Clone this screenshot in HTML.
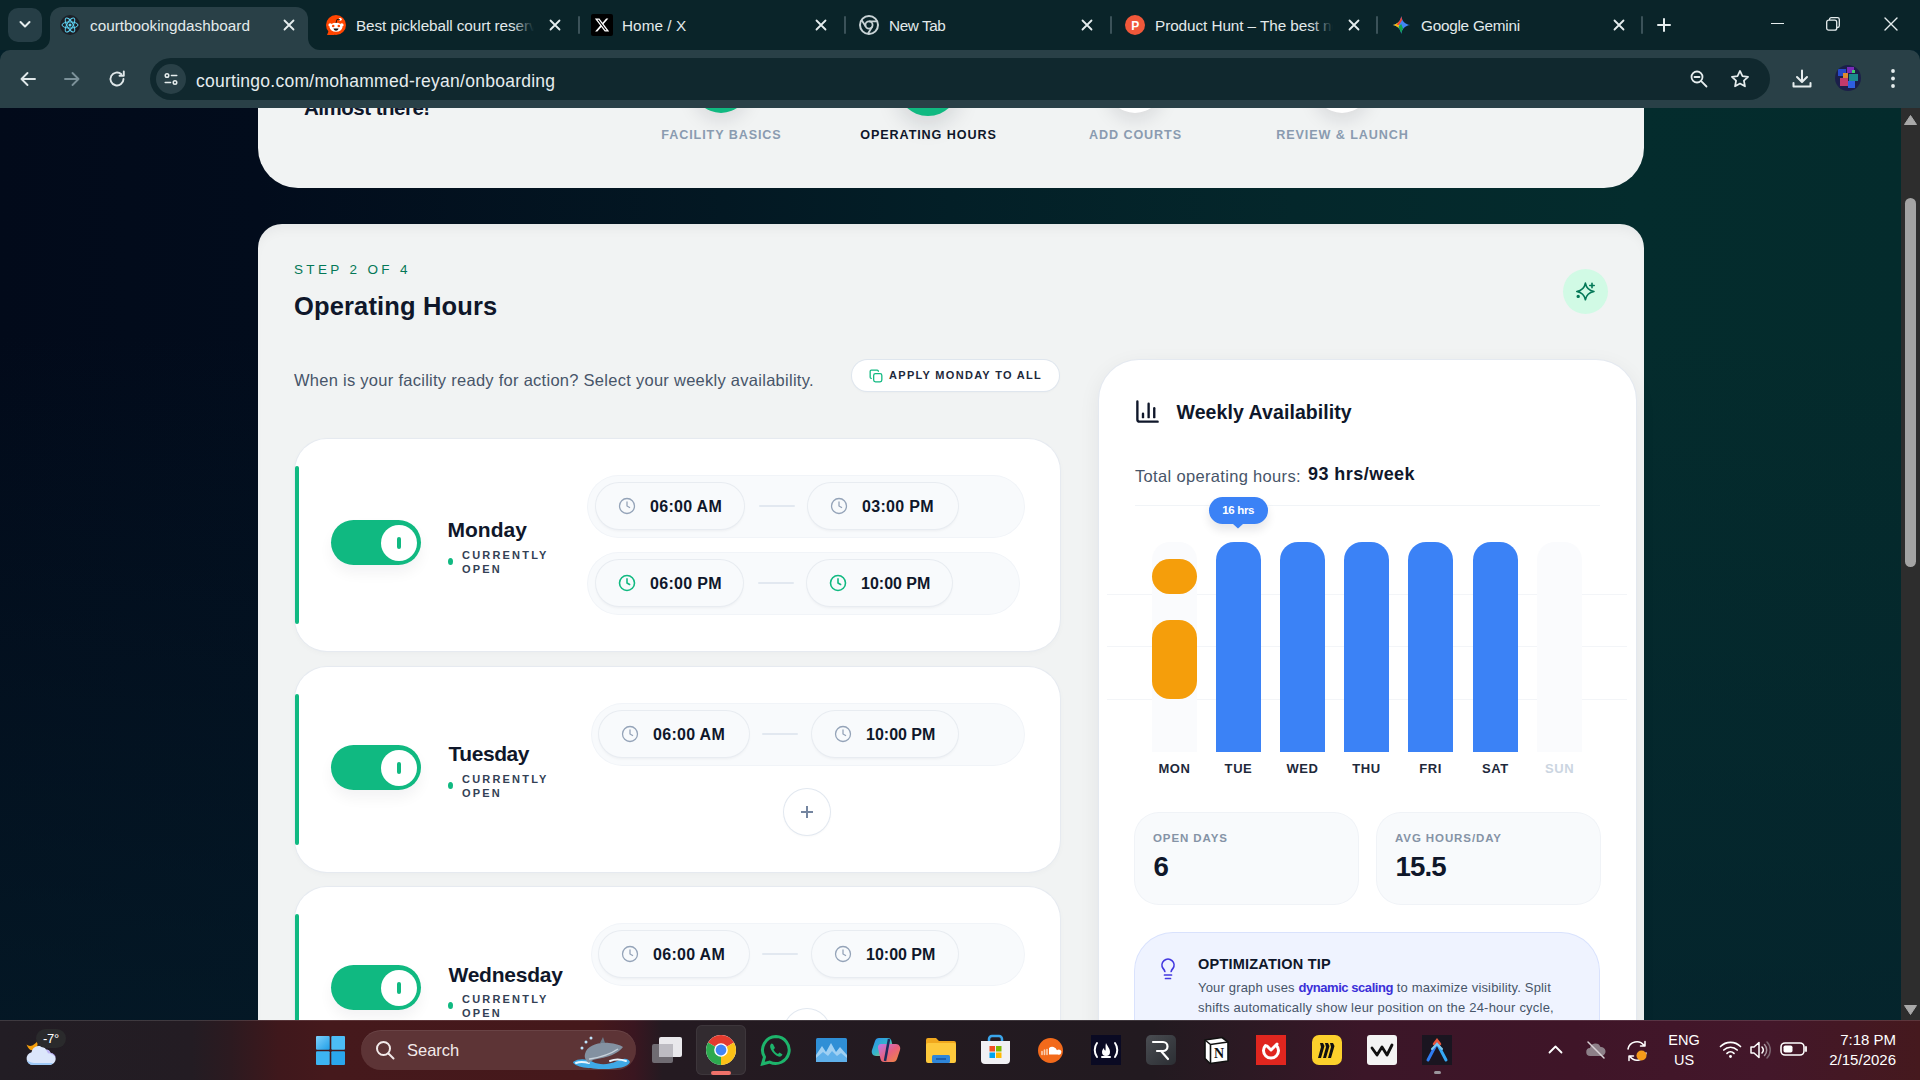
<!DOCTYPE html>
<html lang="en">
<head>
<meta charset="utf-8">
<title>courtbookingdashboard</title>
<style>
*{box-sizing:border-box;margin:0;padding:0}
html,body{width:1920px;height:1080px;overflow:hidden;background:#03202a;font-family:"Liberation Sans",sans-serif;}
.abs{position:absolute}
#root{position:relative;width:1920px;height:1080px;overflow:hidden}
/* ---------- browser chrome ---------- */
#tabstrip{position:absolute;left:0;top:0;width:1920px;height:50px;background:#0a2429}
#toolbar{position:absolute;left:0;top:50px;width:1920px;height:58px;background:#294047;border-radius:10px 10px 0 0}
#omni{position:absolute;left:150px;top:8px;width:1620px;height:42px;border-radius:21px;background:#10282e}
#omni .site{position:absolute;left:6px;top:6px;width:30px;height:30px;border-radius:15px;background:#294047}
#omni .url{position:absolute;left:46px;top:1.500px;line-height:42px;font-size:17.500px;color:#e6edee;letter-spacing:.26px}
.tab{position:absolute;top:7px;height:43px;color:#e3eaeb;font-size:15.5px;line-height:37px}
.tab .t{position:absolute;left:40px;top:0;white-space:nowrap;overflow:hidden}
.tab.active{background:#294047;border-radius:12px 12px 0 0}
.tabsep{position:absolute;top:16px;width:2px;height:18px;background:#3b5259;border-radius:1px}
.ico{position:absolute}
.tt{position:absolute;top:10.500px;height:30px;line-height:30px;font-size:15.3px;color:#e3eaeb;white-space:nowrap;overflow:hidden;letter-spacing:.05px}
.cx{position:absolute;top:19px;width:12px;height:12px;fill:none;stroke:#e6edee;stroke-width:1.8;stroke-linecap:round}
/* ---------- page ---------- */
#page{position:absolute;left:0;top:108px;width:1901px;height:912px;overflow:hidden;
 background:linear-gradient(180deg,rgba(5,32,44,0) 25%,rgba(5,32,44,.6) 100%),linear-gradient(90deg,#020a1a 0%,#020c1c 13.500%,#031823 38%,#031f27 50%,#04272b 68%,#042c2d 86%,#042b2c 100%)}
#sb{position:absolute;left:1901px;top:108px;width:19px;height:912px;background:#2d2d2d}
#sb .thumb{position:absolute;left:3.700px;top:90.300px;width:11.400px;height:369px;border-radius:5.700px;background:#a3a3a3}
.card{position:absolute;background:#f1f3f3}
h1,h2,h3{font-weight:700}
.stl{top:18.500px;text-align:center;font-size:12.600px;font-weight:700;letter-spacing:.9px;line-height:16px;white-space:nowrap;text-indent:1px}
.day{position:absolute;left:295px;width:765px;background:#fff;border-radius:32px;box-shadow:0 0 0 1px #e6eaf0,0 2px 6px rgba(15,23,42,.03)}
.day .bar{position:absolute;left:0;top:27px;width:4px;bottom:27px;background:#10b981;border-radius:2px}
.tog{position:absolute;left:36px;width:90px;height:45px;border-radius:23px;background:#10b981;box-shadow:0 8px 14px rgba(15,23,42,.05)}
.tog i{position:absolute;left:49.500px;top:4.500px;width:36.500px;height:36.500px;border-radius:50%;background:#fff}
.tog i:after{content:"";position:absolute;left:16px;top:12px;width:4.500px;height:12.500px;border-radius:2.250px;background:#10b981}
.dname{position:absolute;left:152.500px;font-size:21px;font-weight:700;color:#0f172a;letter-spacing:0px;white-space:nowrap}
.dstat{position:absolute;left:167px;font-size:11px;font-weight:700;color:#334155;letter-spacing:2.2px;line-height:14px}
.dstat:before{content:"";position:absolute;left:-14.500px;top:10px;width:5px;height:7px;border-radius:50%;background:#10b981}
.row{position:absolute;margin-top:.8px;height:61px;border-radius:30.500px;background:#f8fafc;box-shadow:0 0 0 1px #f1f4f8}
.pill{position:absolute;top:7.500px;height:46px;border-radius:23px;background:#f8fafc;box-shadow:0 0 0 1px #e8ecf1,0 2px 3px rgba(15,23,42,.05)}
.pill span{position:absolute;left:54px;top:.5px;line-height:46px;font-size:16px;font-weight:700;color:#0f172a;letter-spacing:.3px;white-space:nowrap}
.pill svg{position:absolute;left:22px;top:14px}
.dash{position:absolute;top:29.500px;height:2px;width:36px;background:#e2e8f0;border-radius:1px}
.plus{position:absolute;width:46px;height:46px;border-radius:50%;background:#fff;box-shadow:0 0 0 1px #e2e8f0,0 1px 3px rgba(15,23,42,.06)}
.plus:before{content:"";position:absolute;left:17px;top:22.200px;width:12px;height:1.600px;background:#7485a0}
.plus:after{content:"";position:absolute;left:22.200px;top:17px;width:1.600px;height:12px;background:#7485a0}
.trk{position:absolute;top:434px;width:45px;height:210px;border-radius:18px 18px 0 0;background:#fafbfd}
.bl{position:absolute;top:434px;width:45px;height:210px;border-radius:18px 18px 0 0;background:#3b82f6}
.dl{position:absolute;top:652.500px;width:61px;text-align:center;font-size:13px;font-weight:700;color:#1e293b;letter-spacing:.6px;line-height:16px}
.stat{position:absolute;top:705px;margin-left:.5px;width:223px;height:91px;border-radius:24px;background:#f8fafc;box-shadow:0 0 0 1px #f0f3f7}
.stat b{position:absolute;left:18.500px;top:18px;font-size:11.5px;color:#8593a6;letter-spacing:.9px;line-height:14px;white-space:nowrap}
.stat span{position:absolute;left:19px;top:37px;font-size:27.700px;font-weight:700;color:#0f172a;line-height:34px;letter-spacing:-.9px}
/* ---------- taskbar ---------- */
#task{position:absolute;left:0;top:1020px;width:1920px;height:60px;box-shadow:inset 0 1px 0 rgba(255,255,255,.13);
 background:linear-gradient(90deg,#221d24 0%,#231c23 10%,#2c1a20 12%,#3f181c 14.500%,#45191c 17%,#45181b 31%,#3a1620 33%,#241a21 34.500%,#221a20 60%,#2c1923 65%,#3b1628 71%,#3f1528 82%,#43172a 92%,#45191e 100%)}
</style>
</head>
<body>
<div id="root">

<!-- PAGE -->
<div id="page">
<!-- stepper card -->
<div class="card" style="left:258px;top:-120px;width:1386px;height:199.700px;border-radius:40px"></div>
<div class="abs" style="left:304px;top:-12px;font-size:20.500px;font-weight:700;color:#0f172a;letter-spacing:-.5px;line-height:24px;white-space:nowrap">Almost there!</div>
<div class="abs" style="left:693px;top:-51px;width:56px;height:56px;border-radius:50%;background:#10b981;box-shadow:0 8px 18px rgba(15,23,42,.10)"></div>
<div class="abs" style="left:897px;top:-54.500px;width:62px;height:62px;border-radius:50%;background:#10b981;box-shadow:0 10px 22px rgba(15,23,42,.13)"></div>
<div class="abs" style="left:1107px;top:-51px;width:56px;height:56px;border-radius:50%;background:#fff;box-shadow:0 8px 18px rgba(15,23,42,.10)"></div>
<div class="abs" style="left:1314px;top:-51px;width:56px;height:56px;border-radius:50%;background:#fff;box-shadow:0 8px 18px rgba(15,23,42,.10)"></div>
<div class="abs stl" style="left:621px;width:200px;color:#8a9bb0">FACILITY BASICS</div>
<div class="abs stl" style="left:828px;width:200px;color:#0f172a">OPERATING HOURS</div>
<div class="abs stl" style="left:1035px;width:200px;color:#8a9bb0">ADD COURTS</div>
<div class="abs stl" style="left:1242px;width:200px;color:#8a9bb0">REVIEW &amp; LAUNCH</div>

<!-- main card -->
<div class="card" style="left:258px;top:115.500px;width:1386px;height:900px;border-radius:24px 24px 0 0;box-shadow:inset 0 10px 14px -8px rgba(15,23,42,.07)"></div>
<div class="abs" style="left:294px;top:153.500px;font-size:13.500px;color:#047857;letter-spacing:3.35px;line-height:16px;white-space:nowrap">STEP 2 OF 4</div>
<h1 class="abs" style="left:294px;top:181px;font-size:25.500px;color:#0f172a;letter-spacing:.15px;line-height:34px;white-space:nowrap">Operating Hours</h1>
<div class="abs" style="left:1563px;top:161px;width:45px;height:45px;border-radius:50%;background:#d1fae5">
 <svg class="abs" style="left:0;top:0" width="45" height="45" viewBox="0 0 45 45" fill="none" stroke="#047857" stroke-width="1.600" stroke-linecap="round" stroke-linejoin="round"><path d="M22.400 14.100Q23.700 21.200 31 22.450Q23.700 23.700 22.400 30.800Q21.100 23.700 13.800 22.450Q21.100 21.200 22.400 14.100Z"/><path d="M29 14.300v4.400M26.800 16.500h4.400"/><circle cx="15.200" cy="27.400" r=".9" fill="#047857"/></svg>
</div>
<div class="abs" style="left:294px;top:262px;font-size:16.500px;color:#475569;line-height:20px;white-space:nowrap;letter-spacing:.27px">When is your facility ready for action? Select your weekly availability.</div>
<div class="abs" style="left:852px;top:252.400px;width:207px;height:31px;border-radius:15.500px;background:#fff;box-shadow:0 0 0 1px #dfe6ee,0 1px 3px rgba(15,23,42,.05)">
 <svg class="abs" style="left:17px;top:8.600px" width="14" height="14" viewBox="0 0 24 24" fill="none" stroke="#10b981" stroke-width="2.2" stroke-linecap="round" stroke-linejoin="round"><rect x="8" y="8" width="14" height="14" rx="3"/><path d="M4 16c-1.1 0-2-.9-2-2V4c0-1.100.9-2 2-2h10c1.100 0 2 .9 2 2"/></svg>
 <div class="abs" style="left:37px;top:0;line-height:31px;font-size:11px;font-weight:700;color:#1e293b;letter-spacing:1.3px;white-space:nowrap">APPLY MONDAY TO ALL</div>
</div>

<!-- Monday -->
<div class="day" style="top:331px;height:212px">
 <div class="bar"></div>
 <div class="tog" style="top:81px"><i></i></div>
 <div class="dname" style="top:78px;line-height:26px">Monday</div>
 <div class="dstat" style="top:109px">CURRENTLY<br>OPEN</div>
 <div class="row" style="left:293px;top:36px;width:436px">
  <div class="pill" style="left:8px;width:148px"><svg width="18" height="18" viewBox="0 0 24 24" fill="none" stroke="#94a3b8" stroke-width="1.7" stroke-linecap="round" stroke-linejoin="round"><circle cx="12" cy="12" r="10"/><path d="M12 6.500v5.500l3.500 2"/></svg><span>06:00 AM</span></div>
  <div class="dash" style="left:171px"></div>
  <div class="pill" style="left:220px;width:150px"><svg width="18" height="18" viewBox="0 0 24 24" fill="none" stroke="#94a3b8" stroke-width="1.7" stroke-linecap="round" stroke-linejoin="round"><circle cx="12" cy="12" r="10"/><path d="M12 6.500v5.500l3.500 2"/></svg><span>03:00 PM</span></div>
 </div>
 <div class="row" style="left:293px;top:113px;width:431px">
  <div class="pill" style="left:8px;width:147px"><svg width="18" height="18" viewBox="0 0 24 24" fill="none" stroke="#10b981" stroke-width="2.1" stroke-linecap="round" stroke-linejoin="round"><circle cx="12" cy="12" r="10"/><path d="M12 6.500v5.500l3.500 2"/></svg><span>06:00 PM</span></div>
  <div class="dash" style="left:170px"></div>
  <div class="pill" style="left:219px;width:145px"><svg width="18" height="18" viewBox="0 0 24 24" fill="none" stroke="#10b981" stroke-width="2.1" stroke-linecap="round" stroke-linejoin="round"><circle cx="12" cy="12" r="10"/><path d="M12 6.500v5.500l3.500 2"/></svg><span style="letter-spacing:0px">10:00 PM</span></div>
 </div>
</div>

<!-- Tuesday -->
<div class="day" style="top:559px;height:205px">
 <div class="bar"></div>
 <div class="tog" style="top:78px"><i></i></div>
 <div class="dname" style="top:74px;line-height:26px;left:153.500px;letter-spacing:-.45px">Tuesday</div>
 <div class="dstat" style="top:105px">CURRENTLY<br>OPEN</div>
 <div class="row" style="left:297px;top:36px;width:432px">
  <div class="pill" style="left:7px;width:149.500px"><svg width="18" height="18" viewBox="0 0 24 24" fill="none" stroke="#94a3b8" stroke-width="1.7" stroke-linecap="round" stroke-linejoin="round"><circle cx="12" cy="12" r="10"/><path d="M12 6.500v5.500l3.500 2"/></svg><span>06:00 AM</span></div>
  <div class="dash" style="left:170px"></div>
  <div class="pill" style="left:220px;width:146px"><svg width="18" height="18" viewBox="0 0 24 24" fill="none" stroke="#94a3b8" stroke-width="1.7" stroke-linecap="round" stroke-linejoin="round"><circle cx="12" cy="12" r="10"/><path d="M12 6.500v5.500l3.500 2"/></svg><span style="letter-spacing:0px">10:00 PM</span></div>
 </div>
 <div class="plus" style="left:489px;top:122px"></div>
</div>

<!-- Wednesday -->
<div class="day" style="top:779px;height:205px">
 <div class="bar"></div>
 <div class="tog" style="top:78px"><i></i></div>
 <div class="dname" style="top:75px;line-height:26px;left:153.500px;letter-spacing:-.25px">Wednesday</div>
 <div class="dstat" style="top:105px">CURRENTLY<br>OPEN</div>
 <div class="row" style="left:297px;top:36px;width:432px">
  <div class="pill" style="left:7px;width:149.500px"><svg width="18" height="18" viewBox="0 0 24 24" fill="none" stroke="#94a3b8" stroke-width="1.7" stroke-linecap="round" stroke-linejoin="round"><circle cx="12" cy="12" r="10"/><path d="M12 6.500v5.500l3.500 2"/></svg><span>06:00 AM</span></div>
  <div class="dash" style="left:170px"></div>
  <div class="pill" style="left:220px;width:146px"><svg width="18" height="18" viewBox="0 0 24 24" fill="none" stroke="#94a3b8" stroke-width="1.7" stroke-linecap="round" stroke-linejoin="round"><circle cx="12" cy="12" r="10"/><path d="M12 6.500v5.500l3.500 2"/></svg><span style="letter-spacing:0px">10:00 PM</span></div>
 </div>
 <div class="plus" style="left:489px;top:122px"></div>
</div>

<!-- right panel -->
<div class="abs" style="left:1098.500px;top:252px;width:537px;height:800px;border-radius:40px;background:#fff;box-shadow:0 0 0 1px #e4e9f0,0 6px 22px rgba(15,23,42,.07)"></div>
<svg class="abs" style="left:1133.900px;top:290.400px" width="27" height="27" viewBox="0 0 24 24" fill="none" stroke="#0f172a" stroke-width="2.100" stroke-linecap="round" stroke-linejoin="round"><path d="M3 3v16a2 2 0 0 0 2 2h16"/><path d="M18 17V9"/><path d="M13 17V5"/><path d="M8 17v-3"/></svg>
<h2 class="abs" style="left:1176.500px;top:291px;font-size:19.500px;color:#0f172a;letter-spacing:.08px;line-height:26px;white-space:nowrap">Weekly Availability</h2>
<div class="abs" style="left:1135px;top:357.500px;font-size:16.500px;color:#475569;line-height:20px;white-space:nowrap;letter-spacing:.33px">Total operating hours:</div>
<div class="abs" style="left:1308px;top:354px;font-size:18px;font-weight:700;color:#0f172a;line-height:24px;white-space:nowrap;letter-spacing:.45px">93 hrs/week</div>
<div class="abs" style="left:1135px;top:397px;width:465px;height:1px;background:#f1f4f7"></div>
<!-- grid -->
<div class="abs" style="left:1107px;top:486px;width:520px;height:1px;background:#f3f5f8"></div>
<div class="abs" style="left:1107px;top:538px;width:520px;height:1px;background:#f3f5f8"></div>
<div class="abs" style="left:1107px;top:591px;width:520px;height:1px;background:#f3f5f8"></div>
<!-- bars -->
<div class="trk" style="left:1152px"></div>
<div class="abs" style="left:1152px;top:451px;width:45px;height:35px;border-radius:17.500px/17.500px;background:#f59e0b"></div>
<div class="abs" style="left:1152px;top:512px;width:45px;height:79px;border-radius:18px;background:#f59e0b"></div>
<div class="bl" style="left:1216px"></div>
<div class="bl" style="left:1280px"></div>
<div class="bl" style="left:1344px"></div>
<div class="bl" style="left:1408px"></div>
<div class="bl" style="left:1473px"></div>
<div class="trk" style="left:1537px"></div>
<!-- tooltip -->
<div class="abs" style="left:1208.700px;top:389px;width:59px;height:27px;border-radius:13.500px;background:#3b82f6;color:#fff;font-size:11.500px;font-weight:700;text-align:center;line-height:27px;letter-spacing:-.35px;box-shadow:0 6px 10px rgba(15,23,42,.10)">16 hrs</div>
<svg class="abs" style="left:1233.300px;top:415.500px" width="10" height="5"><path d="M0 0H10L5 4.500z" fill="#3b82f6"/></svg>
<!-- labels -->
<div class="dl" style="left:1144px">MON</div>
<div class="dl" style="left:1208px">TUE</div>
<div class="dl" style="left:1272px">WED</div>
<div class="dl" style="left:1336px">THU</div>
<div class="dl" style="left:1400px">FRI</div>
<div class="dl" style="left:1465px">SAT</div>
<div class="dl" style="left:1529px;color:#cbd5e1">SUN</div>
<!-- stats -->
<div class="stat" style="left:1134px"><b>OPEN DAYS</b><span>6</span></div>
<div class="stat" style="left:1376px"><b>AVG HOURS/DAY</b><span>15.5</span></div>
<!-- tip -->
<div class="abs" style="left:1135px;top:825px;width:464px;height:200px;border-radius:38px;background:#eff3ff;box-shadow:0 0 0 1px #d9e2fd"></div>
<svg class="abs" style="left:1158px;top:848px" width="20" height="26" viewBox="0 0 20 26" fill="none" stroke="#4338e0" stroke-width="1.7" stroke-linecap="round" stroke-linejoin="round"><path d="M6.800 15.500c-.2-1.400-.9-2.100-1.700-3a6 6 0 1 1 9.800 0c-.8.900-1.500 1.600-1.700 3"/><path d="M6.500 19h7M7.500 22.500h5"/></svg>
<div class="abs" style="left:1198px;top:847px;font-size:14.500px;font-weight:700;color:#0f172a;letter-spacing:.22px;line-height:18px;white-space:nowrap">OPTIMIZATION TIP</div>
<div class="abs" style="left:1198px;top:870px;font-size:13px;color:#475569;line-height:20px;white-space:nowrap"><span style="letter-spacing:.17px">Your graph uses <b style="color:#3b2fd8;letter-spacing:-.45px">dynamic scaling</b> to maximize visibility. Split</span><br><span style="letter-spacing:.22px">shifts automatically show leur position on the 24-hour cycle,</span><br><span style="letter-spacing:.2px">and the blue bars mark your longest operating days.</span></div>

</div>
<div id="sb">
  <svg class="abs" style="left:3px;top:7px" width="13" height="10"><path d="M6.500 .5L12.500 9.500H.5z" fill="#a8a8a8" stroke="#a8a8a8" stroke-width="1" stroke-linejoin="round"/></svg>
  <div class="thumb"></div>
  <svg class="abs" style="left:3px;top:897px" width="13" height="10"><path d="M.5 .5H12.500L6.500 9.500z" fill="#a8a8a8" stroke="#a8a8a8" stroke-width="1" stroke-linejoin="round"/></svg>
</div>

<!-- BROWSER CHROME -->
<div id="tabstrip">
<div class="abs" style="left:8px;top:8px;width:34px;height:34px;border-radius:10px;background:#263e46"></div>
<svg class="abs" style="left:19px;top:20px" width="12" height="9" viewBox="0 0 12 9" fill="none" stroke="#e6edee" stroke-width="2" stroke-linecap="round" stroke-linejoin="round"><path d="M1.500 2l4.500 4.500L10.500 2"/></svg>
<!-- active tab -->
<div class="tab active" style="left:50px;width:258px"></div>
<svg class="abs" style="left:38px;top:38px" width="12" height="12"><path d="M12 0V12H0A12 12 0 0 0 12 0z" fill="#294047"/></svg>
<svg class="abs" style="left:308px;top:38px" width="12" height="12"><path d="M0 0V12H12A12 12 0 0 1 0 0z" fill="#294047"/></svg>
<svg class="abs" style="left:60px;top:15px" width="20" height="20" viewBox="-10 -10 20 20"><circle r="10" fill="#1c1f26"/><g fill="none" stroke="#5ed3f3" stroke-width="1"><ellipse rx="8" ry="3.100"/><ellipse rx="8" ry="3.100" transform="rotate(60)"/><ellipse rx="8" ry="3.100" transform="rotate(120)"/></g><circle r="1.500" fill="#5ed3f3"/></svg>
<div class="tt" style="left:90px;width:180px;letter-spacing:0px">courtbookingdashboard</div>
<svg class="cx" style="left:283px"><path d="M1.500 1.500l9 9M10.500 1.500l-9 9"/></svg>
<!-- tab 2 reddit -->
<svg class="abs" style="left:326px;top:15px" width="20" height="20" viewBox="0 0 20 20"><circle cx="10" cy="10" r="10" fill="#ff4500"/><path d="M1 20L3.500 14 9 19.900z" fill="#ff4500"/><ellipse cx="10" cy="12.200" rx="6.300" ry="4.500" fill="#fff"/><circle cx="4.200" cy="10" r="1.800" fill="#fff"/><circle cx="15.800" cy="10" r="1.800" fill="#fff"/><circle cx="14.200" cy="4.300" r="1.500" fill="#fff"/><path d="M10 8l1-3.600 3 .4" stroke="#111" stroke-width=".9" fill="none"/><circle cx="7.200" cy="11" r="1.300" fill="#ff4500"/><circle cx="12.800" cy="11" r="1.300" fill="#ff4500"/><path d="M7.500 13.500h5c-.4 1.500-1.400 2.200-2.500 2.200s-2.100-.7-2.500-2.200z" fill="#111"/></svg>
<div class="tt" style="left:356px;width:178px;letter-spacing:-.08px">Best pickleball court reserva</div>
<div class="abs" style="left:512px;top:10px;width:22px;height:32px;background:linear-gradient(90deg,rgba(10,36,41,0),#0a2429)"></div>
<svg class="cx" style="left:549px"><path d="M1.500 1.500l9 9M10.500 1.500l-9 9"/></svg>
<div class="tabsep" style="left:578px"></div>
<!-- tab 3 X -->
<div class="abs" style="left:591px;top:14px;width:22px;height:22px;background:#000;border-radius:2px"></div>
<svg class="abs" style="left:594px;top:17px" width="16" height="16" viewBox="0 0 24 24"><path fill="#fff" d="M18.244 2.250h3.308l-7.227 8.260 8.502 11.240H16.170l-5.214-6.817L4.990 21.750H1.680l7.730-8.835L1.254 2.250H8.080l4.713 6.231zm-1.161 17.520h1.833L7.084 4.126H5.117z"/></svg>
<div class="tt" style="left:622px;width:180px">Home / X</div>
<svg class="cx" style="left:815px"><path d="M1.500 1.500l9 9M10.500 1.500l-9 9"/></svg>
<div class="tabsep" style="left:844px"></div>
<!-- tab 4 new tab -->
<svg class="abs" style="left:859px;top:15px" width="20" height="20" viewBox="-10 -10 20 20"><circle r="9" fill="none" stroke="#c9d3d6" stroke-width="2"/><circle r="3.600" fill="none" stroke="#c9d3d6" stroke-width="1.800"/><path d="M0-3.600H8.500M3.100 1.800L-1.200 9M-3.100 1.800L-7.600-5.200" stroke="#c9d3d6" stroke-width="1.800" fill="none"/></svg>
<div class="tt" style="left:889px;width:180px;letter-spacing:-.4px">New Tab</div>
<svg class="cx" style="left:1081px"><path d="M1.500 1.500l9 9M10.500 1.500l-9 9"/></svg>
<div class="tabsep" style="left:1110px"></div>
<!-- tab 5 product hunt -->
<svg class="abs" style="left:1125px;top:15px" width="20" height="20" viewBox="0 0 20 20"><circle cx="10" cy="10" r="10" fill="#f0583a"/><text x="10.300" y="14.500" text-anchor="middle" font-family="Liberation Sans,sans-serif" font-weight="700" font-size="12" fill="#fff">P</text></svg>
<div class="tt" style="left:1155px;width:178px;letter-spacing:-.07px">Product Hunt – The best new</div>
<div class="abs" style="left:1311px;top:10px;width:22px;height:32px;background:linear-gradient(90deg,rgba(10,36,41,0),#0a2429)"></div>
<svg class="cx" style="left:1348px"><path d="M1.500 1.500l9 9M10.500 1.500l-9 9"/></svg>
<div class="tabsep" style="left:1376px"></div>
<!-- tab 6 gemini -->
<svg class="abs" style="left:1392px;top:16px" width="18.500" height="18" viewBox="0 0 20 20"><defs><clipPath id="gmc"><path d="M10 0C10.700 5.600 14.400 9.300 20 10 14.400 10.700 10.700 14.400 10 20 9.300 14.400 5.600 10.700 0 10 5.600 9.300 9.300 5.600 10 0z"/></clipPath></defs><g clip-path="url(#gmc)"><rect width="20" height="20" fill="#4285f4"/><path d="M0 10L7 3.500 7.500 10 7 16z" fill="#fbbc04"/><path d="M5 10L10 0 12 3 7.500 10z" fill="#ea4335"/><path d="M7 12L10 9 12 14 10 20 8 16z" fill="#10a64a"/></g></svg>
<div class="tt" style="left:1421px;width:180px;letter-spacing:-.24px">Google Gemini</div>
<svg class="cx" style="left:1613px"><path d="M1.500 1.500l9 9M10.500 1.500l-9 9"/></svg>
<div class="tabsep" style="left:1641px"></div>
<svg class="abs" style="left:1657px;top:18px" width="14" height="14" fill="none" stroke="#e6edee" stroke-width="2" stroke-linecap="round"><path d="M7 1v12M1 7h12"/></svg>
<!-- window controls -->
<div class="abs" style="left:1771px;top:22.500px;width:13px;height:1.200px;background:#e6edee"></div>
<svg class="abs" style="left:1826px;top:17px" width="14" height="14" fill="none" stroke="#e6edee" stroke-width="1.300"><rect x=".7" y="3.200" width="10" height="10" rx="2"/><path d="M3.500 3V2.500a1.800 1.800 0 0 1 1.800-1.800h6.200a1.800 1.800 0 0 1 1.800 1.800v6.200a1.800 1.800 0 0 1-1.800 1.800H11"/></svg>
<svg class="abs" style="left:1884px;top:17px" width="14" height="14" fill="none" stroke="#e6edee" stroke-width="1.400" stroke-linecap="round"><path d="M1 1l12 12M13 1L1 13"/></svg>

</div>
<div id="toolbar">
<svg class="abs" style="left:18px;top:19px" width="20" height="20" viewBox="0 0 20 20" fill="none" stroke="#dfe7e9" stroke-width="1.900" stroke-linecap="round" stroke-linejoin="round"><path d="M17 10H3.500M9.500 4L3.500 10l6 6"/></svg>
<svg class="abs" style="left:62px;top:19px" width="20" height="20" viewBox="0 0 20 20" fill="none" stroke="#7b9199" stroke-width="1.900" stroke-linecap="round" stroke-linejoin="round"><path d="M3 10h13.500M10.500 4l6 6-6 6"/></svg>
<svg class="abs" style="left:107px;top:19px" width="20" height="20" viewBox="0 0 20 20" fill="none" stroke="#dfe7e9" stroke-width="1.900" stroke-linecap="round" stroke-linejoin="round"><path d="M16.500 10a6.500 6.500 0 1 1-2.100-4.800"/><path d="M16.800 2.500v4.300h-4.300" /></svg>
<div id="omni">
 <div class="site"></div>
 <svg class="abs" style="left:13px;top:13px" width="16" height="16" viewBox="0 0 18 18" fill="none" stroke="#e6edee" stroke-width="1.700" stroke-linecap="round"><circle cx="4.500" cy="5" r="2"/><path d="M9.500 5h6"/><circle cx="13.500" cy="13" r="2"/><path d="M2.500 13h6"/></svg>
 <div class="url">courtingo.com/mohammed-reyan/onboarding</div>
 <svg class="abs" style="left:1539px;top:11px" width="20" height="20" viewBox="0 0 20 20" fill="none" stroke="#e6edee" stroke-width="1.800" stroke-linecap="round"><circle cx="8" cy="8" r="5.500"/><path d="M12.200 12.200l5.300 5.300M5.500 8h5"/></svg>
 <svg class="abs" style="left:1579px;top:10px" width="22" height="22" viewBox="0 0 24 24" fill="none" stroke="#e6edee" stroke-width="1.900" stroke-linejoin="round"><path d="M12 3.200l2.700 5.600 6.100.8-4.500 4.300 1.100 6.100L12 17l-5.400 3 1.100-6.100L3.200 9.600l6.100-.8z"/></svg>
</div>
<svg class="abs" style="left:1791px;top:18px" width="22" height="22" viewBox="0 0 22 22" fill="none" stroke="#e6edee" stroke-width="2" stroke-linecap="round" stroke-linejoin="round"><path d="M11 2.500v11M6 9l5 5 5-5M2.500 15v3.500h17V15"/></svg>
<svg class="abs" style="left:1835px;top:15px" width="26" height="26" viewBox="0 0 26 26"><defs><clipPath id="av"><circle cx="13" cy="13" r="13"/></clipPath></defs><g clip-path="url(#av)"><rect width="26" height="26" fill="#1b1f4a"/><rect x="3" y="4" width="8" height="7" fill="#2749c9"/><rect x="12" y="2" width="7" height="6" fill="#7a2bb5"/><rect x="14" y="9" width="9" height="7" fill="#1c8a8e"/><rect x="5" y="13" width="8" height="8" fill="#c23a6b"/><rect x="13" y="16" width="7" height="7" fill="#2e5fe0"/><rect x="8" y="8" width="5" height="5" fill="#e08a2e"/><rect x="17" y="5" width="3" height="3" fill="#3ccf6e"/></g></svg>
<svg class="abs" style="left:1890px;top:18px" width="6" height="22" fill="#e6edee"><circle cx="3" cy="3" r="1.900"/><circle cx="3" cy="10.500" r="1.900"/><circle cx="3" cy="18" r="1.900"/></svg>

</div>

<!-- TASKBAR -->
<div id="task">
<!-- weather -->
<svg class="abs" style="left:24px;top:19px" width="36" height="27" viewBox="0 0 36 27"><path d="M2.500 5.500c2 2 5.500 2 8-.5 1.500-1 2.300-2 2.800-3 .8 3 .2 6.500-2.300 8.500-3 2-6.500.5-8.500-5z" fill="#f59e0b"/><path d="M9 26a6.500 6.500 0 0 1-1.500-12.800A8 8 0 0 1 22 10.500a5 5 0 0 1 4.500 3.200A6.200 6.200 0 0 1 26 26z" fill="#dbe6fb"/><path d="M9 26a6.500 6.500 0 0 1-6.300-5c3 2.500 6 3 10 3h16.500A6.200 6.200 0 0 1 26 26z" fill="#9ec9f7"/><path d="M22 10.500a5 5 0 0 1 4.500 3.200 6.200 6.200 0 0 1 5.500 5c-2-3-5-4.500-8-4.500z" fill="#a992f0" opacity=".6"/></svg>
<div class="abs" style="left:36px;top:8.500px;width:30px;height:19.500px;border-radius:10px;background:#2a2a2c;color:#fff;font-size:13px;line-height:19.500px;text-align:center;letter-spacing:-.3px">-7°</div>
<!-- windows -->
<svg class="abs" style="left:316px;top:16px" width="29" height="29" viewBox="0 0 29 29"><defs><linearGradient id="wg" x1="0" y1="0" x2="1" y2="1"><stop offset="0" stop-color="#7fd0fb"/><stop offset="1" stop-color="#1f9fe8"/></linearGradient></defs><rect width="13.700" height="13.700" rx="1" fill="url(#wg)"/><rect x="15.300" width="13.700" height="13.700" rx="1" fill="#4cbdf6"/><rect y="15.300" width="13.700" height="13.700" rx="1" fill="#3db4f2"/><rect x="15.300" y="15.300" width="13.700" height="13.700" rx="1" fill="#2aa6ec"/></svg>
<!-- search -->
<div class="abs" style="left:361px;top:10px;width:275px;height:40px;border-radius:20px;background:#5d3436;box-shadow:inset 0 1px 0 rgba(255,255,255,.08)"></div>
<svg class="abs" style="left:375px;top:20px" width="20" height="20" viewBox="0 0 20 20" fill="none" stroke="#f2eaea" stroke-width="2" stroke-linecap="round"><circle cx="8.500" cy="8.500" r="6.500"/><path d="M13.500 13.500l5 5"/></svg>
<div class="abs" style="left:407px;top:10px;line-height:40px;font-size:16.500px;color:#f2eaea">Search</div>
<svg class="abs" style="left:570px;top:14px" width="62" height="36" viewBox="0 0 62 36"><path d="M3 28c6-4 14-3 20 0s16 3 24-1 12-2 13 1c-2 5-12 7-26 7S4 33 3 28z" fill="#3fa9e6"/><path d="M6 29c5-2 9-1 13 0M40 27c5-2 10-2 16 0" stroke="#e9f6ff" stroke-width="2" fill="none" stroke-linecap="round"/><path d="M15 20c2-8 12-12 24-11 6 .5 11 2 14 4-3 4-9 8-17 10-7 2-14 2-17 6-3-2-5-5-4-9z" fill="#8391a1"/><path d="M19 25c6-1 17-2 29-10" stroke="#c9d2db" stroke-width="1.500" fill="none"/><path d="M30 9l3-6 2 6z" fill="#6d7a89"/><circle cx="16" cy="8" r="1.500" fill="#bfe4fb"/><circle cx="21" cy="4" r="1.500" fill="#bfe4fb"/><circle cx="12" cy="14" r="1.500" fill="#bfe4fb"/></svg>
<!-- task view -->
<svg class="abs" style="left:651px;top:15px" width="32" height="30" viewBox="0 0 32 30"><rect x="1" y="9" width="21" height="19" rx="2" fill="#6f6b72"/><rect x="8" y="2" width="23" height="20" rx="2" fill="#e9e8ec"/><rect x="8" y="9" width="14" height="13" fill="#bdbbc2"/></svg>
<!-- chrome -->
<div class="abs" style="left:696px;top:5px;width:50px;height:50px;border-radius:6px;background:#322b30;box-shadow:inset 0 0 0 1px #3d363b"></div>
<svg class="abs" style="left:706px;top:15px" width="30" height="30" viewBox="-15 -15 30 30"><circle r="15" fill="#fff"/><path d="M0 0L-12.990-7.500A15 15 0 0 1 12.990-7.500z" fill="#e33b2e"/><path d="M0 0L12.990-7.500A15 15 0 0 1 0 15z" fill="#fbc116"/><path d="M0 0L0 15A15 15 0 0 1-12.990-7.500z" fill="#2da94f"/><circle r="6.800" fill="#fff"/><circle r="5.400" fill="#4285f4"/></svg>
<div class="abs" style="left:711px;top:51px;width:20px;height:4px;border-radius:2px;background:#f0716a"></div>
<!-- whatsapp -->
<svg class="abs" style="left:760px;top:14px" width="32" height="32" viewBox="0 0 32 32"><path d="M16 2.500A13.500 13.500 0 0 0 4.500 23L2.500 30l7.200-1.900A13.500 13.500 0 1 0 16 2.500z" fill="none" stroke="#1db46b" stroke-width="3"/><path d="M11.500 9.500c-1.500 1-2 3-.5 6s4.500 6 7.500 7c2 .5 3.500-.5 4-2l-3-2-1.500 1.500c-2-1-3.500-2.500-4.500-4.500L15 14l-2-4z" fill="#1db46b"/></svg>
<!-- photos -->
<svg class="abs" style="left:816px;top:18px" width="31" height="24" viewBox="0 0 31 24"><rect width="31" height="24" rx="1.500" fill="#2f8fd6"/><path d="M0 17l6-9 4 6 5-9 5 9 4-5 7 8v7H0z" fill="#9fd0f3"/><path d="M0 20l7-6 5 4 4-5 5 5 4-3 6 5v4H0z" fill="#5fb0ea"/></svg>
<!-- copilot -->
<svg class="abs" style="left:870px;top:16px" width="32" height="28" viewBox="0 0 32 28"><defs><linearGradient id="cp1" x1="0" y1="0" x2="1" y2="1"><stop offset="0" stop-color="#2a8cf0"/><stop offset=".5" stop-color="#35b6c9"/><stop offset="1" stop-color="#f0c02e"/></linearGradient><linearGradient id="cp2" x1="0" y1="0" x2="1" y2="1"><stop offset="0" stop-color="#b77af0"/><stop offset=".5" stop-color="#e8607f"/><stop offset="1" stop-color="#f08a3c"/></linearGradient></defs><path d="M9 2h9c2 0 3 1 3.500 3L24 16c.5 2-1 4-3 4H6c-3 0-5-3-4-6L5 5c.7-2 2-3 4-3z" fill="url(#cp1)"/><path d="M23 26h-9c-2 0-3-1-3.500-3L8 12c-.5-2 1-4 3-4h15c3 0 5 3 4 6l-3 9c-.7 2-2 3-4 3z" fill="url(#cp2)"/><path d="M19 3l-4 22" stroke="#1d2a5c" stroke-width="2.500"/></svg>
<!-- folder -->
<svg class="abs" style="left:925px;top:16px" width="32" height="28" viewBox="0 0 32 28"><path d="M1 4a2 2 0 0 1 2-2h8l3 3h15a2 2 0 0 1 2 2v4H1z" fill="#f0a81e"/><rect x="1" y="7" width="30" height="20" rx="2" fill="#fdc93c"/><rect x="7" y="19" width="18" height="8" rx="1.500" fill="#2f86d9"/><rect x="11" y="22" width="10" height="2" fill="#1b5fae"/></svg>
<!-- store -->
<svg class="abs" style="left:980px;top:14px" width="31" height="32" viewBox="0 0 31 32"><path d="M9 8V5a3 3 0 0 1 3-3h7a3 3 0 0 1 3 3v3" fill="none" stroke="#3aa5ea" stroke-width="2.500"/><path d="M1 7h29v19a4 4 0 0 1-4 4H5a4 4 0 0 1-4-4z" fill="#f1f1f4"/><rect x="9.500" y="12" width="5.500" height="5.500" fill="#f25022"/><rect x="16" y="12" width="5.500" height="5.500" fill="#7fba00"/><rect x="9.500" y="18.500" width="5.500" height="5.500" fill="#00a4ef"/><rect x="16" y="18.500" width="5.500" height="5.500" fill="#ffb900"/></svg>
<!-- soundcloud -->
<svg class="abs" style="left:1038px;top:18px" width="25" height="25" viewBox="0 0 25 25"><circle cx="12.500" cy="12.500" r="12.500" fill="#f26a1b"/><path d="M4 16.500v-3M6.500 16.500v-4.500M9 16.500v-5" stroke="#fbd2b4" stroke-width="1.600" stroke-linecap="round"/><path d="M11 16.500V10a5 5 0 0 1 8 2.200 2.600 2.600 0 1 1 .8 4.300z" fill="#fff"/></svg>
<!-- freecodecamp -->
<div class="abs" style="left:1091px;top:20px;width:30px;height:30px;top:5px;margin-top:10px;background:#0a0a23"></div>
<svg class="abs" style="left:1091px;top:15px" width="30" height="30" viewBox="0 0 30 30" fill="none" stroke="#fff" stroke-width="2" stroke-linecap="round"><path d="M6 8c-3 4-3 10 0 14M24 8c3 4 3 10 0 14"/><path d="M15 8c1 3 4 5 4 9a4 4 0 0 1-8 0c0-2 1-3 2-4 0 2 1 2.500 1.500 2.500C15 14 14 11 15 8z" fill="#fff" stroke="none"/><path d="M11 22h8" /></svg>
<!-- R -->
<div class="abs" style="left:1146px;top:15px;width:30px;height:30px;border-radius:5px;background:linear-gradient(135deg,#4a4d52,#2b2e33)"></div>
<svg class="abs" style="left:1146px;top:15px" width="30" height="30" viewBox="0 0 30 30" fill="none" stroke="#fff" stroke-width="2.200" stroke-linecap="round" stroke-linejoin="round"><path d="M7 7h10a4.500 4.500 0 0 1 0 9h-6M15 16l7 8"/></svg>
<!-- notion -->
<svg class="abs" style="left:1203px;top:16px" width="27" height="29" viewBox="0 0 27 29"><path d="M2 4l17-2.500 6 4.500v19l-18 2.500-5-5z" fill="#fff" stroke="#111" stroke-width="1.600" stroke-linejoin="round"/><path d="M2 4l5.500 4.500L25 6M7.500 8.500v19" stroke="#111" stroke-width="1.600" fill="none"/><text x="16" y="22" text-anchor="middle" font-family="Liberation Serif,serif" font-weight="700" font-size="14" fill="#111">N</text></svg>
<!-- red app -->
<div class="abs" style="left:1256px;top:15px;width:30px;height:30px;background:#e0261f"></div>
<svg class="abs" style="left:1256px;top:15px" width="30" height="30" viewBox="0 0 30 30" fill="none" stroke="#fff" stroke-width="3" stroke-linecap="round" stroke-linejoin="round"><path d="M9.500 10.500a7.500 7.500 0 1 0 11 0"/><path d="M11 11l4 4 6-6"/></svg>
<!-- miro -->
<div class="abs" style="left:1312px;top:15px;width:30px;height:30px;border-radius:7px;background:#fcd02c"></div>
<svg class="abs" style="left:1312px;top:15px" width="30" height="30" viewBox="0 0 30 30" fill="#111"><path d="M8 8h3l1.500 3L9 23H6l3-11zM13 8h3l1.500 3L14 23h-3l3-11zM18 8h3l1.500 3L19 23h-3l3-11z"/></svg>
<!-- W -->
<div class="abs" style="left:1367px;top:15px;width:30px;height:30px;border-radius:3px;background:#f4f4f4"></div>
<svg class="abs" style="left:1367px;top:15px" width="30" height="30" viewBox="0 0 30 30" fill="none" stroke="#111" stroke-width="2.800" stroke-linecap="round" stroke-linejoin="round"><path d="M5 13l5 7 5-8 5 8 5-10"/></svg>
<!-- A app -->
<div class="abs" style="left:1422px;top:15px;width:30px;height:30px;background:#1a1520"></div>
<svg class="abs" style="left:1422px;top:15px" width="30" height="30" viewBox="0 0 30 30" fill="none" stroke-linecap="round" stroke-width="3"><path d="M6 25l9-17" stroke="#2f7cf0"/><path d="M15 8l9 17" stroke="#35a8f5"/><path d="M12 9l3-4 3 4" stroke="#e8553c" stroke-width="2.500"/><path d="M10 14l5-5 5 5" stroke="#7cc8f0" stroke-width="2"/></svg>
<div class="abs" style="left:1434px;top:51px;width:7px;height:3px;border-radius:1.500px;background:#9a959c"></div>
<!-- tray -->
<svg class="abs" style="left:1548px;top:25px" width="15" height="9" fill="none" stroke="#fff" stroke-width="1.800" stroke-linecap="round" stroke-linejoin="round"><path d="M1.500 7.500l6-6 6 6"/></svg>
<svg class="abs" style="left:1585px;top:20px" width="22" height="20" viewBox="0 0 22 20"><path d="M5.500 16a4 4 0 0 1-.5-8 5.500 5.500 0 0 1 10.500-1A4.500 4.500 0 0 1 16.500 16z" fill="#8d8088"/><path d="M3 2l16 16" stroke="#d9d2d6" stroke-width="1.500" stroke-linecap="round"/></svg>
<svg class="abs" style="left:1625px;top:19px" width="24" height="24" viewBox="0 0 24 24" fill="none" stroke="#fff" stroke-width="1.500" stroke-linecap="round" stroke-linejoin="round"><path d="M3 10a9 9 0 0 1 16-3.500M20 2.500v4.500h-4.500M21 14a9 9 0 0 1-16 3.500M4 21.500V17h4.500"/><circle cx="16.500" cy="16.500" r="5" fill="#f59b1a" stroke="none"/></svg>
<div class="abs" style="left:1660px;top:10px;width:48px;text-align:center;color:#fff;font-size:14.500px;line-height:20px">ENG<br>US</div>
<svg class="abs" style="left:1719px;top:20px" width="23" height="19" viewBox="0 0 23 19" fill="none" stroke="#fff" stroke-width="1.700" stroke-linecap="round"><path d="M1.500 6.500a14 14 0 0 1 20 0M4.800 10a9.500 9.500 0 0 1 13.400 0M8 13.300a5 5 0 0 1 7 0"/><circle cx="11.500" cy="16.500" r="1.400" fill="#fff" stroke="none"/></svg>
<svg class="abs" style="left:1749px;top:20px" width="24" height="20" viewBox="0 0 24 20" fill="none" stroke="#fff" stroke-width="1.500" stroke-linecap="round" stroke-linejoin="round"><path d="M2 7h3l5-4.500v15L5 13H2z"/><path d="M13 7a4.500 4.500 0 0 1 0 6"/><path d="M15.500 4.500a8 8 0 0 1 0 11" stroke="#a9979f"/><path d="M18 2a11.500 11.500 0 0 1 0 16" stroke="#7b6570"/></svg>
<svg class="abs" style="left:1780px;top:22px" width="28" height="15" viewBox="0 0 28 15"><rect x="1" y="1" width="23" height="12" rx="4" fill="none" stroke="#fff" stroke-width="1.600"/><rect x="3.500" y="3.500" width="9" height="7" rx="1.800" fill="#fff"/><path d="M26 5v4" stroke="#fff" stroke-width="1.800" stroke-linecap="round"/></svg>
<div class="abs" style="left:1796px;top:10px;width:100px;text-align:right;color:#fff;font-size:15px;line-height:20px;letter-spacing:0px">7:18 PM<br>2/15/2026</div>

</div>

</div>
</body>
</html>
